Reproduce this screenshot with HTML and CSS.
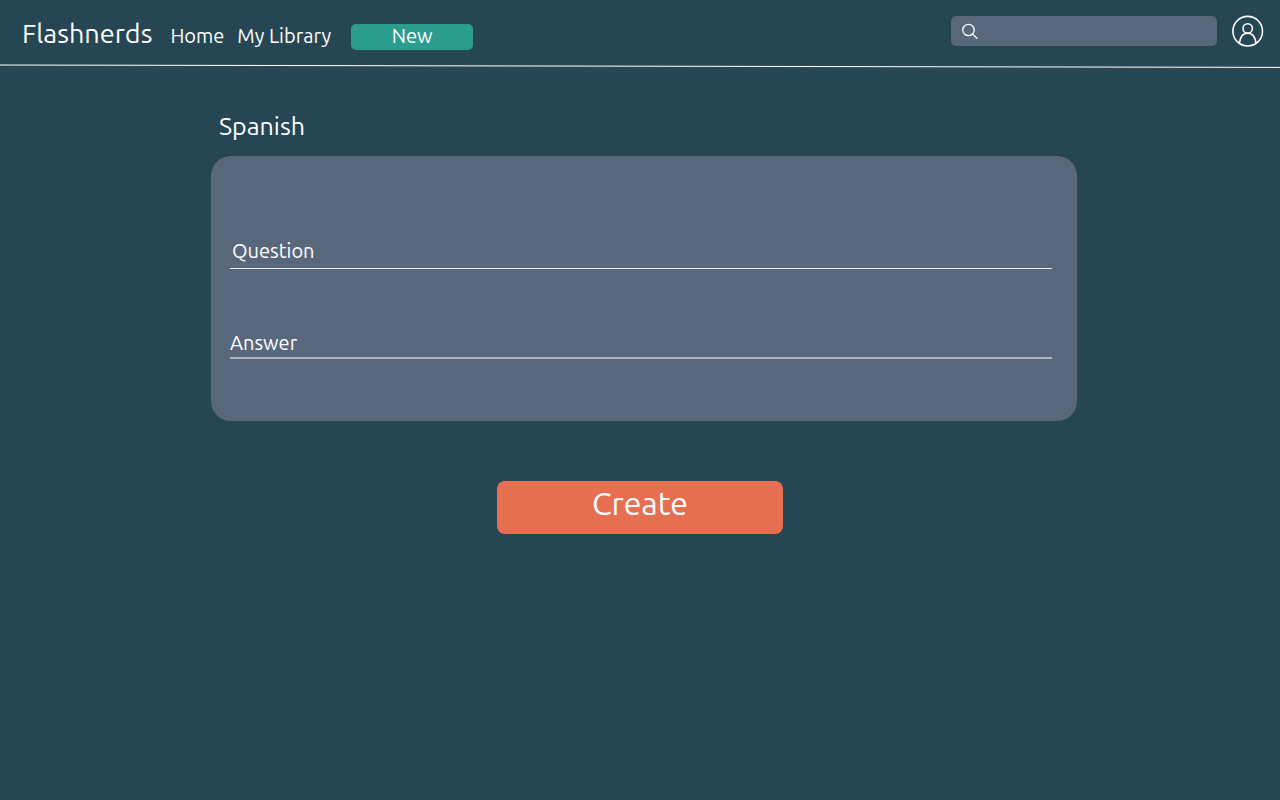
FILE: index.html
```html
<!DOCTYPE html>
<html lang="en">
<head>
  <meta charset="utf-8">
  <meta name="viewport" content="width=device-width, initial-scale=1">
  <title>Flashnerds</title>
  <link rel="stylesheet" href="styles.css">
</head>
<body>
  <header class="header">
    <div class="bar">
      <nav class="nav">
        <a class="brand" href="#">Flashnerds</a>
        <a class="nav-link" href="#">Home</a>
        <a class="nav-link" href="#">My Library</a>
        <button class="new-button" type="button">New</button>
      </nav>
      <form class="search" role="search">
        <svg class="search-icon" viewBox="0 0 16 16" aria-hidden="true">
          <circle cx="6.5" cy="7" r="5.7"/>
          <path d="M10.6 11.1 15.4 15.700"/>
        </svg>
        <input class="search-input" type="search" aria-label="Search">
      </form>
      <a class="account" href="#" aria-label="Account">
        <svg class="account-icon" viewBox="0 0 32 32" aria-hidden="true">
          <circle cx="15.700" cy="16.200" r="14.8"/>
          <circle cx="15.700" cy="13.400" r="4.7"/>
          <path d="M7.300 28.200C8.200 22 11.200 18.100 15.700 18.100S23.200 22 24.100 28.200"/>
        </svg>
      </a>
    </div>
    <svg class="divider" viewBox="0 0 1280 4" preserveAspectRatio="none" aria-hidden="true">
      <path d="M0 1 1280 3.400"/>
    </svg>
  </header>

  <main class="main">
    <form class="editor">
      <h1 class="title">Spanish</h1>
      <div class="card">
        <input class="field question" type="text" placeholder="Question" aria-label="Question">
        <input class="field answer" type="text" placeholder="Answer" aria-label="Answer">
      </div>
    </form>
    <button class="create-button" type="button">Create</button>
  </main>
</body>
</html>
```

FILE: styles.css
```css
* {
  box-sizing: border-box;
}

body {
  margin: 0;
  min-height: 100vh;
  background: #264653;
  color: #fff;
  font-family: Ubuntu, "Noto Sans", sans-serif;
  font-size: 20px;
  line-height: 24px;
}

a {
  color: inherit;
  text-decoration: none;
}

button,
input {
  border: 0;
  color: inherit;
  font: inherit;
}

button {
  cursor: pointer;
}

.bar {
  display: flex;
  align-items: center;
  height: 62px;
  padding: 0 16px 0 22px;
}

.nav {
  display: flex;
  align-items: baseline;
  flex: 1;
  padding-top: 5px;
  white-space: nowrap;
}

.brand {
  margin-right: 18px;
  font-size: 27px;
  line-height: 32px;
}

.nav-link {
  margin-right: 13px;
}

.new-button {
  width: 122px;
  height: 26px;
  margin-left: 7px;
  padding: 0 0 2px;
  border-radius: 5px;
  background: #2a9d8f;
}

.search {
  display: flex;
  align-items: center;
  width: 266px;
  height: 30px;
  padding: 0 11px;
  border-radius: 5px;
  background: #59677c;
}

.search-icon {
  flex: none;
  width: 16px;
  height: 16px;
  fill: none;
  stroke: #fff;
  stroke-width: 1.3;
}

.search-input {
  flex: 1;
  min-width: 0;
  margin-left: 8px;
  padding: 0;
  background: none;
  font-size: 16px;
  outline: none;
}

.account {
  display: flex;
  margin-left: 15px;
}

.account-icon {
  width: 32px;
  height: 32px;
  fill: none;
  stroke: #fff;
  stroke-width: 1.6;
}

.divider {
  display: block;
  width: 100%;
  height: 4px;
  margin-top: 2px;
  fill: none;
  stroke: #fff;
  stroke-width: 1;
}

.main {
  display: flex;
  flex-direction: column;
  align-items: center;
  padding: 42px 16px;
}

.editor {
  width: 100%;
  max-width: 874px;
  padding-left: 8px;
}

.title {
  margin: 0 0 14px;
  padding-left: 8px;
  font-size: 25px;
  font-weight: 400;
  line-height: 32px;
}

.card {
  display: flex;
  flex-direction: column;
  padding: 79px 25px 62px 19px;
  border-radius: 20px;
  background: #59677c;
}

.field {
  width: 100%;
  padding: 0;
  border-radius: 0;
  background: none;
  outline: none;
}

.field::placeholder {
  color: #fff;
  opacity: 1;
}

.question {
  height: 34px;
  padding: 0 2px 2px;
  border-bottom: 1px solid #e9ebee;
}

.answer {
  height: 34px;
  margin-top: 56px;
  padding-top: 3px;
  border-bottom: 2px solid #acb3be;
}

.create-button {
  width: 286px;
  height: 53px;
  margin-top: 60px;
  padding: 0 0 9px;
  border-radius: 8px;
  background: #e76f51;
  font-size: 32px;
  line-height: 40px;
}
```
